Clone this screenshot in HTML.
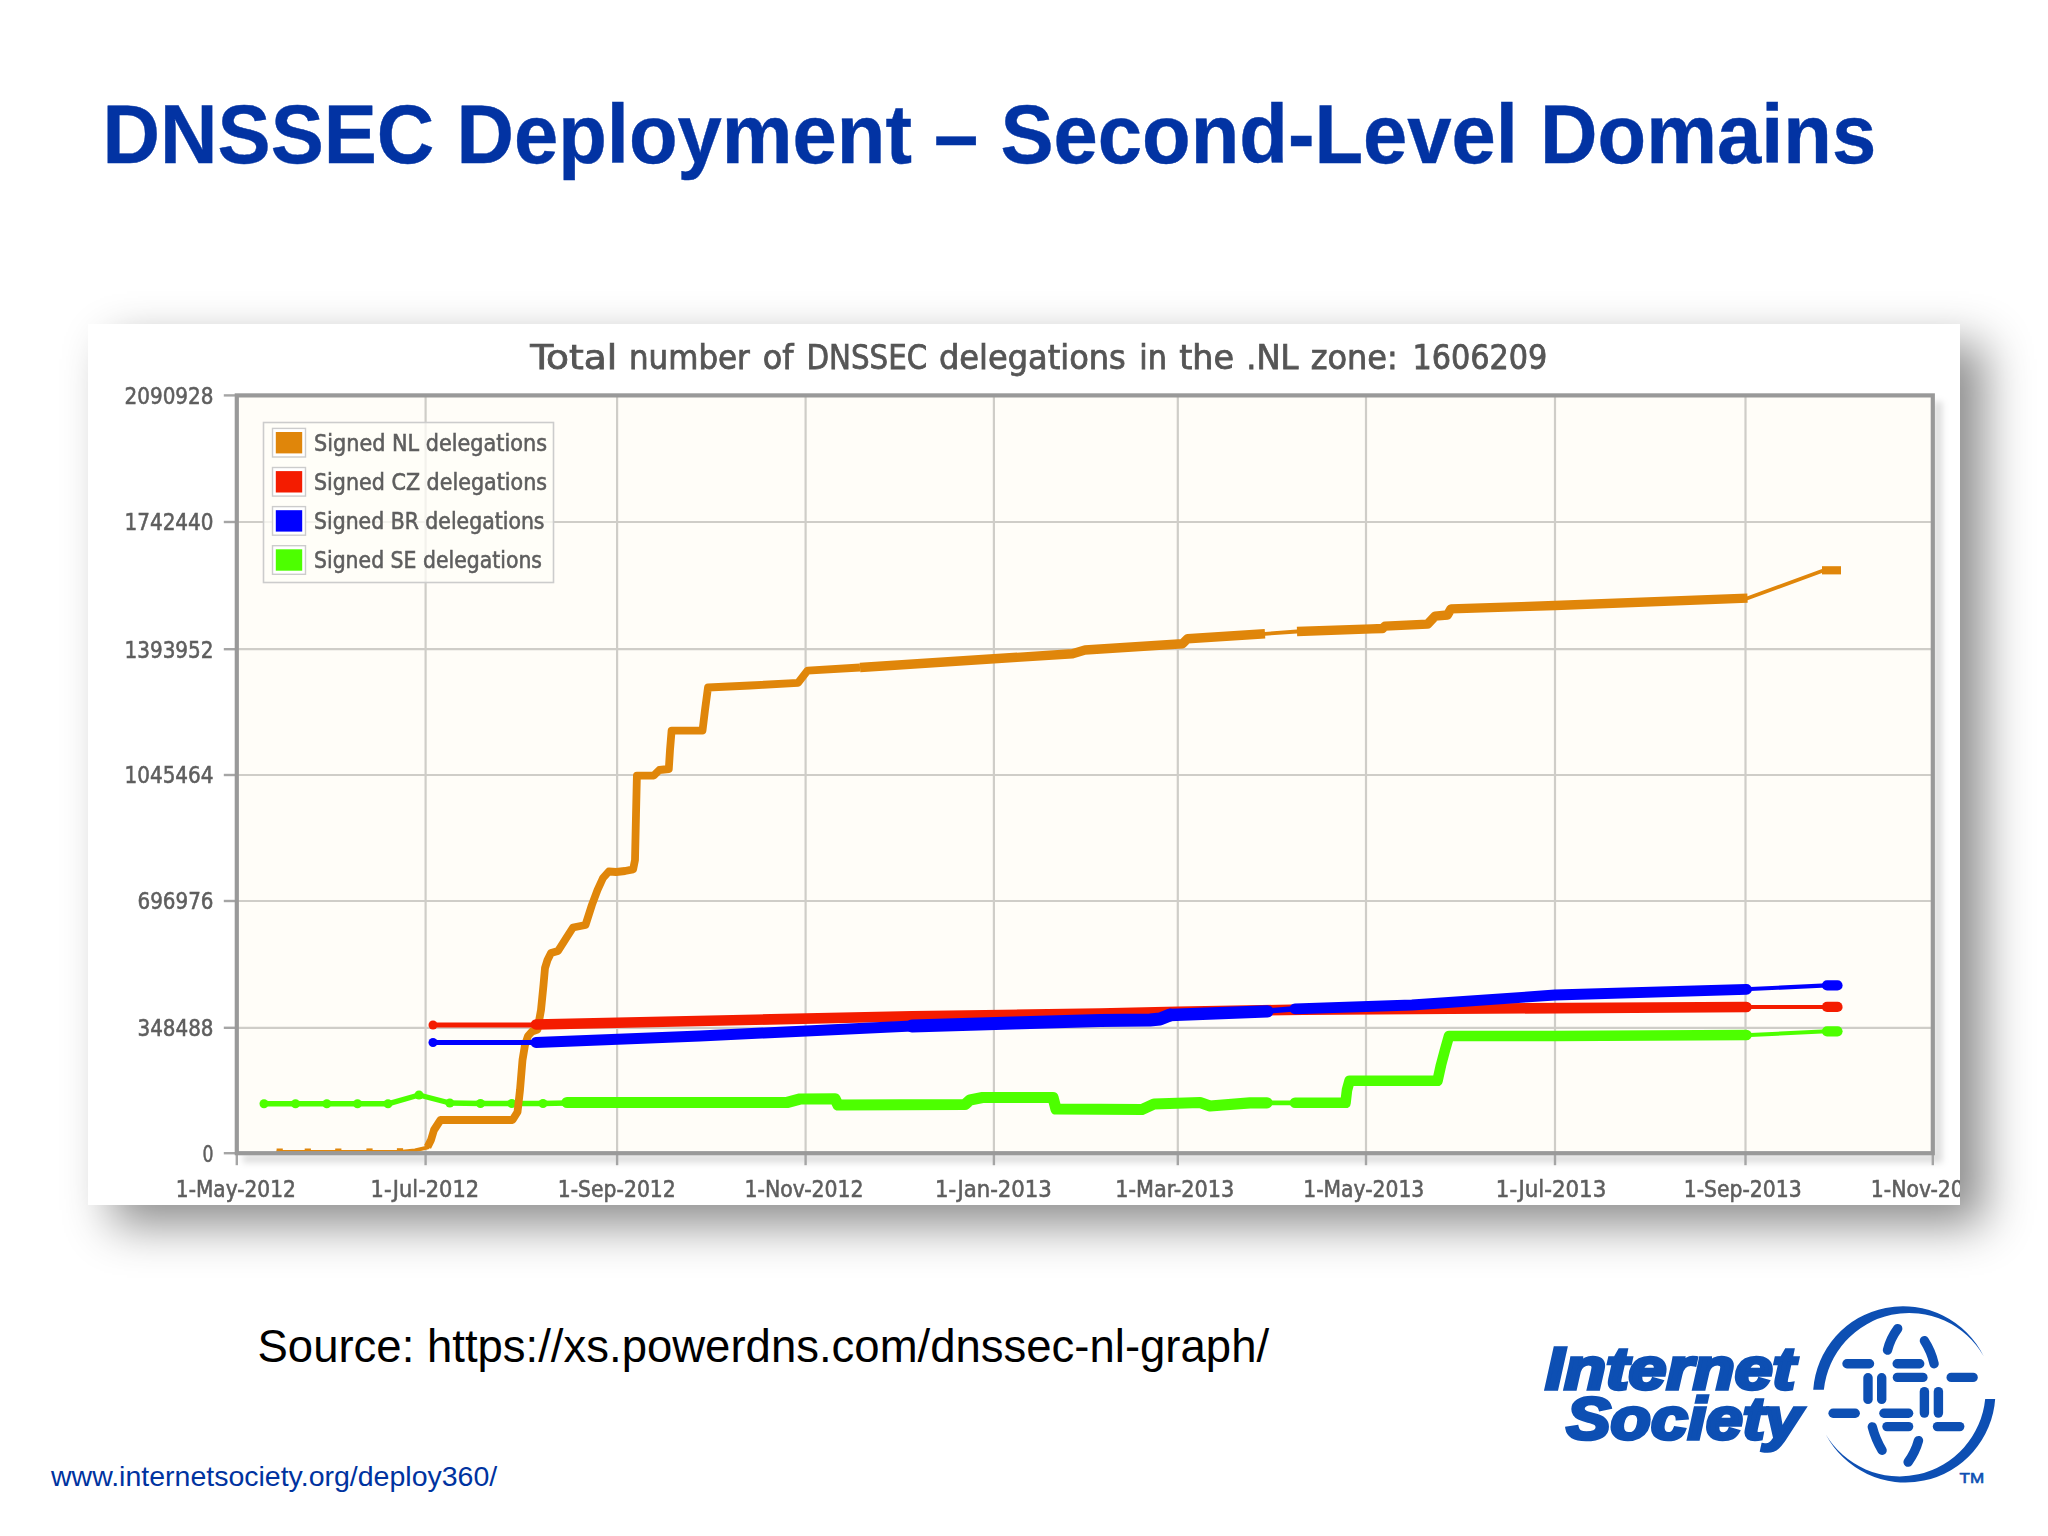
<!DOCTYPE html>
<html lang="en"><head><meta charset="utf-8"><title>DNSSEC Deployment – Second-Level Domains</title>
<style>
html,body{margin:0;padding:0;background:#fff;}
body{width:2048px;height:1536px;position:relative;overflow:hidden;font-family:"Liberation Sans",sans-serif;}
.title{position:absolute;left:102.6px;transform:scaleY(1.046);transform-origin:0 73.6px;top:90px;margin:0;font-size:79.6px;line-height:92px;font-weight:bold;color:#0233a3;-webkit-text-stroke:0.4px #0233a3;white-space:nowrap;}
.card{position:absolute;left:88px;top:324px;width:1872px;height:881px;background:#fff;box-shadow:24px 20px 44px rgba(0,0,2,0.45);}
.source{position:absolute;left:257.5px;top:1321px;font-size:45.5px;line-height:52px;color:#000;white-space:nowrap;}
.foot{position:absolute;left:51px;top:1458.5px;font-size:28.5px;line-height:34px;color:#0033a0;white-space:nowrap;}
</style></head><body>
<h1 class="title">DNSSEC Deployment – Second-Level Domains</h1>
<div class="card"></div>
<svg width="2048" height="1536" viewBox="0 0 2048 1536" style="position:absolute;left:0;top:0">
<defs><filter id="soft" color-interpolation-filters="sRGB" x="-2%" y="-2%" width="104%" height="104%"><feGaussianBlur stdDeviation="0.72"/></filter><filter id="gsh" color-interpolation-filters="sRGB" x="-5%" y="-5%" width="110%" height="110%"><feGaussianBlur stdDeviation="3"/></filter><clipPath id="cardclip"><rect x="88" y="324" width="1872" height="881"/></clipPath></defs>
<g clip-path="url(#cardclip)"><g filter="url(#soft)">
<path d="M242.8,1158.2 H1937.8 V401.4" fill="none" stroke="#000" stroke-opacity="0.13" stroke-width="9" filter="url(#gsh)"/>
<rect x="236.8" y="395.4" width="1696.0" height="757.8000000000001" fill="#fffdf8"/>
<line x1="425.6" y1="395.4" x2="425.6" y2="1153.2" stroke="#cfcdc8" stroke-width="2.2"/>
<line x1="617.1" y1="395.4" x2="617.1" y2="1153.2" stroke="#cfcdc8" stroke-width="2.2"/>
<line x1="805.6" y1="395.4" x2="805.6" y2="1153.2" stroke="#cfcdc8" stroke-width="2.2"/>
<line x1="993.9" y1="395.4" x2="993.9" y2="1153.2" stroke="#cfcdc8" stroke-width="2.2"/>
<line x1="1177.8" y1="395.4" x2="1177.8" y2="1153.2" stroke="#cfcdc8" stroke-width="2.2"/>
<line x1="1366.0" y1="395.4" x2="1366.0" y2="1153.2" stroke="#cfcdc8" stroke-width="2.2"/>
<line x1="1555.0" y1="395.4" x2="1555.0" y2="1153.2" stroke="#cfcdc8" stroke-width="2.2"/>
<line x1="1745.5" y1="395.4" x2="1745.5" y2="1153.2" stroke="#cfcdc8" stroke-width="2.2"/>
<line x1="236.8" y1="522.0" x2="1932.8" y2="522.0" stroke="#cfcdc8" stroke-width="2.2"/>
<line x1="236.8" y1="649.2" x2="1932.8" y2="649.2" stroke="#cfcdc8" stroke-width="2.2"/>
<line x1="236.8" y1="775.0" x2="1932.8" y2="775.0" stroke="#cfcdc8" stroke-width="2.2"/>
<line x1="236.8" y1="901.0" x2="1932.8" y2="901.0" stroke="#cfcdc8" stroke-width="2.2"/>
<line x1="236.8" y1="1027.8" x2="1932.8" y2="1027.8" stroke="#cfcdc8" stroke-width="2.2"/>
<line x1="236.8" y1="1153.2" x2="236.8" y2="1165.2" stroke="#a5a5a5" stroke-width="2.4"/>
<line x1="425.6" y1="1153.2" x2="425.6" y2="1165.2" stroke="#a5a5a5" stroke-width="2.4"/>
<line x1="617.1" y1="1153.2" x2="617.1" y2="1165.2" stroke="#a5a5a5" stroke-width="2.4"/>
<line x1="805.6" y1="1153.2" x2="805.6" y2="1165.2" stroke="#a5a5a5" stroke-width="2.4"/>
<line x1="993.9" y1="1153.2" x2="993.9" y2="1165.2" stroke="#a5a5a5" stroke-width="2.4"/>
<line x1="1177.8" y1="1153.2" x2="1177.8" y2="1165.2" stroke="#a5a5a5" stroke-width="2.4"/>
<line x1="1366.0" y1="1153.2" x2="1366.0" y2="1165.2" stroke="#a5a5a5" stroke-width="2.4"/>
<line x1="1555.0" y1="1153.2" x2="1555.0" y2="1165.2" stroke="#a5a5a5" stroke-width="2.4"/>
<line x1="1745.5" y1="1153.2" x2="1745.5" y2="1165.2" stroke="#a5a5a5" stroke-width="2.4"/>
<line x1="1932.8" y1="1153.2" x2="1932.8" y2="1165.2" stroke="#a5a5a5" stroke-width="2.4"/>
<line x1="223.8" y1="395.4" x2="236.8" y2="395.4" stroke="#a5a5a5" stroke-width="2.4"/>
<line x1="223.8" y1="522.0" x2="236.8" y2="522.0" stroke="#a5a5a5" stroke-width="2.4"/>
<line x1="223.8" y1="649.2" x2="236.8" y2="649.2" stroke="#a5a5a5" stroke-width="2.4"/>
<line x1="223.8" y1="775.0" x2="236.8" y2="775.0" stroke="#a5a5a5" stroke-width="2.4"/>
<line x1="223.8" y1="901.0" x2="236.8" y2="901.0" stroke="#a5a5a5" stroke-width="2.4"/>
<line x1="223.8" y1="1027.8" x2="236.8" y2="1027.8" stroke="#a5a5a5" stroke-width="2.4"/>
<line x1="223.8" y1="1153.2" x2="236.8" y2="1153.2" stroke="#a5a5a5" stroke-width="2.4"/>
<rect x="263.5" y="422.5" width="290" height="160" fill="#fffdf8" fill-opacity="0.75" stroke="#cccccc" stroke-width="1.6"/>
<rect x="272.5" y="428.4" width="33" height="28.6" fill="#fff" stroke="#cccccc" stroke-width="1.4"/>
<rect x="275.8" y="432.0" width="26.4" height="21.4" fill="#e0860a"/>
<text x="314" y="451.0" font-family='"DejaVu Sans Condensed","DejaVu Sans","Liberation Sans",sans-serif' font-size="23.5" fill="#5e5e5e" stroke="#5e5e5e" stroke-width="0.55" textLength="233" lengthAdjust="spacingAndGlyphs">Signed NL delegations</text>
<rect x="272.5" y="467.5" width="33" height="28.6" fill="#fff" stroke="#cccccc" stroke-width="1.4"/>
<rect x="275.8" y="471.1" width="26.4" height="21.4" fill="#f41c00"/>
<text x="314" y="490.1" font-family='"DejaVu Sans Condensed","DejaVu Sans","Liberation Sans",sans-serif' font-size="23.5" fill="#5e5e5e" stroke="#5e5e5e" stroke-width="0.55" textLength="233" lengthAdjust="spacingAndGlyphs">Signed CZ delegations</text>
<rect x="272.5" y="506.6" width="33" height="28.6" fill="#fff" stroke="#cccccc" stroke-width="1.4"/>
<rect x="275.8" y="510.2" width="26.4" height="21.4" fill="#0000ff"/>
<text x="314" y="529.2" font-family='"DejaVu Sans Condensed","DejaVu Sans","Liberation Sans",sans-serif' font-size="23.5" fill="#5e5e5e" stroke="#5e5e5e" stroke-width="0.55" textLength="230.5" lengthAdjust="spacingAndGlyphs">Signed BR delegations</text>
<rect x="272.5" y="545.7" width="33" height="28.6" fill="#fff" stroke="#cccccc" stroke-width="1.4"/>
<rect x="275.8" y="549.3" width="26.4" height="21.4" fill="#4dff00"/>
<text x="314" y="568.3" font-family='"DejaVu Sans Condensed","DejaVu Sans","Liberation Sans",sans-serif' font-size="23.5" fill="#5e5e5e" stroke="#5e5e5e" stroke-width="0.55" textLength="228" lengthAdjust="spacingAndGlyphs">Signed SE delegations</text>
<polyline points="264.0,1103.8 295.5,1103.8 326.8,1103.8 357.5,1103.8 388.0,1103.8 419.0,1095.0 449.8,1103.0 480.5,1103.5 511.8,1103.5 543.0,1103.5 567.0,1103.0" fill="none" stroke="#4dff00" stroke-width="5.4" stroke-linejoin="round" stroke-linecap="round"/>
<polyline points="1267.0,1102.8 1295.0,1102.8" fill="none" stroke="#4dff00" stroke-width="4.7" stroke-linejoin="round" stroke-linecap="round"/>
<polyline points="1750.0,1035.0 1827.0,1031.3" fill="none" stroke="#4dff00" stroke-width="4.0" stroke-linejoin="round" stroke-linecap="round"/>
<polyline points="567.0,1102.5 787.0,1102.5 800.0,1099.0 835.0,1098.8 838.0,1105.0 965.0,1104.5 970.0,1100.0 982.5,1097.5 1053.0,1097.5 1056.0,1109.0 1142.0,1109.5 1154.0,1104.0 1200.0,1102.5 1210.0,1106.0 1250.0,1102.8 1267.0,1102.8" fill="none" stroke="#4dff00" stroke-width="11.2" stroke-linejoin="round" stroke-linecap="round"/>
<polyline points="1295.0,1102.8 1345.5,1102.8 1347.0,1090.0 1349.5,1080.8 1437.5,1080.8 1441.0,1065.0 1445.0,1050.0 1449.0,1036.0 1555.0,1036.0 1746.5,1035.0" fill="none" stroke="#4dff00" stroke-width="10.6" stroke-linejoin="round" stroke-linecap="round"/>
<polyline points="1827.0,1031.3 1837.5,1031.3" fill="none" stroke="#4dff00" stroke-width="10.2" stroke-linejoin="round" stroke-linecap="round"/>
<circle cx="264.0" cy="1103.8" r="4.5" fill="#4dff00"/>
<circle cx="295.5" cy="1103.8" r="4.5" fill="#4dff00"/>
<circle cx="326.8" cy="1103.8" r="4.5" fill="#4dff00"/>
<circle cx="357.5" cy="1103.8" r="4.5" fill="#4dff00"/>
<circle cx="388.0" cy="1103.8" r="4.5" fill="#4dff00"/>
<circle cx="419.0" cy="1095.0" r="4.5" fill="#4dff00"/>
<circle cx="449.8" cy="1103.0" r="4.5" fill="#4dff00"/>
<circle cx="480.5" cy="1103.5" r="4.5" fill="#4dff00"/>
<circle cx="511.8" cy="1103.5" r="4.5" fill="#4dff00"/>
<circle cx="543.0" cy="1103.5" r="4.5" fill="#4dff00"/>

<polyline points="278.0,1152.0 400.0,1151.8 415.0,1150.3 428.0,1147.3" fill="none" stroke="#e0860a" stroke-width="3.8" stroke-linejoin="round" stroke-linecap="round"/>
<polyline points="1265.0,633.8 1297.0,631.5" fill="none" stroke="#e0860a" stroke-width="3.8" stroke-linejoin="round" stroke-linecap="round"/>
<polyline points="1747.5,598.2 1824.0,570.3" fill="none" stroke="#e0860a" stroke-width="3.8" stroke-linejoin="round" stroke-linecap="round"/>
<polyline points="427.5,1147.0 431.0,1140.0 434.0,1130.0 440.5,1120.0 512.5,1120.0 517.5,1112.0 520.0,1090.0 522.5,1060.0 525.0,1045.0 528.0,1036.0 532.0,1031.5 537.5,1029.5 541.0,1010.0 543.5,985.0 545.0,968.0 547.5,960.0 551.0,953.0 558.0,951.0 565.0,940.0 573.0,927.5 585.5,925.0 591.9,905.0 597.5,890.0 603.0,878.0 608.8,871.5 616.2,872.0 625.0,871.0 633.1,869.4 635.0,860.0 636.0,815.0 636.9,775.6 653.8,775.6 659.4,770.0 668.8,769.0 670.0,750.0 671.6,730.6 702.5,730.6 705.0,710.0 708.0,687.5 750.0,685.5 798.0,682.8 807.5,670.6 860.0,667.5" fill="none" stroke="#e0860a" stroke-width="7.8" stroke-linejoin="round" stroke-linecap="butt"/>
<polyline points="860.0,667.5 994.0,658.8 1072.5,653.8 1085.0,650.0 1182.5,643.8 1187.5,638.8 1265.0,633.8" fill="none" stroke="#e0860a" stroke-width="9.4" stroke-linejoin="round" stroke-linecap="butt"/>
<polyline points="1297.0,631.5 1372.0,628.8 1382.5,628.5 1385.0,626.2 1427.5,624.2 1435.0,616.2 1447.5,615.0 1451.0,608.8 1555.0,605.5 1747.5,598.2" fill="none" stroke="#e0860a" stroke-width="9.3" stroke-linejoin="round" stroke-linecap="butt"/>
<polyline points="1822.0,570.3 1841.0,570.3" fill="none" stroke="#e0860a" stroke-width="8.2" stroke-linejoin="round" stroke-linecap="butt"/>
<rect x="276.6" y="1148.5" width="6.2" height="6.2" fill="#e0860a"/>
<rect x="304.7" y="1148.5" width="6.2" height="6.2" fill="#e0860a"/>
<rect x="335.2" y="1148.5" width="6.2" height="6.2" fill="#e0860a"/>
<rect x="366.4" y="1148.4" width="6.2" height="6.2" fill="#e0860a"/>
<rect x="396.9" y="1148.2" width="6.2" height="6.2" fill="#e0860a"/>

<polyline points="433.0,1025.0 536.0,1025.0" fill="none" stroke="#f41c00" stroke-width="4.8" stroke-linejoin="round" stroke-linecap="round"/>
<polyline points="1750.0,1007.0 1827.0,1006.9" fill="none" stroke="#f41c00" stroke-width="4.0" stroke-linejoin="round" stroke-linecap="round"/>
<polyline points="536.0,1024.5 912.0,1016.3 1100.0,1013.5 1177.5,1011.8 1303.0,1009.6 1412.0,1009.0 1746.5,1007.0" fill="none" stroke="#f41c00" stroke-width="10.6" stroke-linejoin="round" stroke-linecap="round"/>
<polyline points="1827.0,1006.9 1837.5,1006.9" fill="none" stroke="#f41c00" stroke-width="10.2" stroke-linejoin="round" stroke-linecap="round"/>
<circle cx="433.0" cy="1025.0" r="4.5" fill="#f41c00"/>

<polyline points="433.0,1042.5 536.0,1042.5" fill="none" stroke="#0000ff" stroke-width="5.0" stroke-linejoin="round" stroke-linecap="round"/>
<polyline points="1267.5,1011.0 1295.0,1008.8" fill="none" stroke="#0000ff" stroke-width="5.4" stroke-linejoin="round" stroke-linecap="round"/>
<polyline points="1750.0,989.0 1827.0,985.4" fill="none" stroke="#0000ff" stroke-width="4.1" stroke-linejoin="round" stroke-linecap="round"/>
<polyline points="536.0,1042.5 700.0,1036.0 912.0,1026.0" fill="none" stroke="#0000ff" stroke-width="11" stroke-linejoin="round" stroke-linecap="round"/>
<polyline points="912.0,1026.0 1100.0,1020.5 1150.0,1020.0 1160.0,1019.0 1170.0,1015.0" fill="none" stroke="#0000ff" stroke-width="13" stroke-linejoin="round" stroke-linecap="round"/>
<polyline points="1170.0,1015.0 1267.5,1011.3" fill="none" stroke="#0000ff" stroke-width="12.3" stroke-linejoin="round" stroke-linecap="round"/>
<polyline points="1295.0,1008.8 1412.0,1005.0 1555.0,995.0 1746.5,989.4" fill="none" stroke="#0000ff" stroke-width="10.8" stroke-linejoin="round" stroke-linecap="round"/>
<polyline points="1827.0,985.4 1837.5,985.4" fill="none" stroke="#0000ff" stroke-width="10.2" stroke-linejoin="round" stroke-linecap="round"/>
<circle cx="433.0" cy="1042.5" r="4.5" fill="#0000ff"/>

<rect x="236.8" y="395.4" width="1696.0" height="757.8000000000001" fill="none" stroke="#999" stroke-width="4.2"/>
<text y="368.5" font-family='"DejaVu Sans Condensed","DejaVu Sans","Liberation Sans",sans-serif' font-size="33.5" fill="#555" stroke="#555" stroke-width="0.75"><tspan x="530.2" textLength="87.0" lengthAdjust="spacingAndGlyphs">Total</tspan> <tspan x="629.0" textLength="120.8" lengthAdjust="spacingAndGlyphs">number</tspan> <tspan x="762.8" textLength="30.7" lengthAdjust="spacingAndGlyphs">of</tspan> <tspan x="806.5" textLength="120.7" lengthAdjust="spacingAndGlyphs">DNSSEC</tspan> <tspan x="939.0" textLength="186.8" lengthAdjust="spacingAndGlyphs">delegations</tspan> <tspan x="1139.3" textLength="27.7" lengthAdjust="spacingAndGlyphs">in</tspan> <tspan x="1179.2" textLength="54.9" lengthAdjust="spacingAndGlyphs">the</tspan> <tspan x="1246.3" textLength="52.2" lengthAdjust="spacingAndGlyphs">.NL</tspan> <tspan x="1310.7" textLength="87.1" lengthAdjust="spacingAndGlyphs">zone:</tspan> <tspan x="1412.5" textLength="134.8" lengthAdjust="spacingAndGlyphs">1606209</tspan> </text>
<text x="124.5" y="403.7" font-family='"DejaVu Sans Condensed","DejaVu Sans","Liberation Sans",sans-serif' font-size="23.5" fill="#5e5e5e" stroke="#5e5e5e" stroke-width="0.55" textLength="89" lengthAdjust="spacingAndGlyphs">2090928</text>
<text x="124.5" y="530.3" font-family='"DejaVu Sans Condensed","DejaVu Sans","Liberation Sans",sans-serif' font-size="23.5" fill="#5e5e5e" stroke="#5e5e5e" stroke-width="0.55" textLength="89" lengthAdjust="spacingAndGlyphs">1742440</text>
<text x="124.5" y="657.5" font-family='"DejaVu Sans Condensed","DejaVu Sans","Liberation Sans",sans-serif' font-size="23.5" fill="#5e5e5e" stroke="#5e5e5e" stroke-width="0.55" textLength="89" lengthAdjust="spacingAndGlyphs">1393952</text>
<text x="124.5" y="783.3" font-family='"DejaVu Sans Condensed","DejaVu Sans","Liberation Sans",sans-serif' font-size="23.5" fill="#5e5e5e" stroke="#5e5e5e" stroke-width="0.55" textLength="89" lengthAdjust="spacingAndGlyphs">1045464</text>
<text x="137.5" y="909.3" font-family='"DejaVu Sans Condensed","DejaVu Sans","Liberation Sans",sans-serif' font-size="23.5" fill="#5e5e5e" stroke="#5e5e5e" stroke-width="0.55" textLength="76" lengthAdjust="spacingAndGlyphs">696976</text>
<text x="137.5" y="1036.1" font-family='"DejaVu Sans Condensed","DejaVu Sans","Liberation Sans",sans-serif' font-size="23.5" fill="#5e5e5e" stroke="#5e5e5e" stroke-width="0.55" textLength="76" lengthAdjust="spacingAndGlyphs">348488</text>
<text x="202.5" y="1161.5" font-family='"DejaVu Sans Condensed","DejaVu Sans","Liberation Sans",sans-serif' font-size="23.5" fill="#5e5e5e" stroke="#5e5e5e" stroke-width="0.55" textLength="11" lengthAdjust="spacingAndGlyphs">0</text>
<text x="175.8" y="1196.5" font-family='"DejaVu Sans Condensed","DejaVu Sans","Liberation Sans",sans-serif' font-size="23.5" fill="#5e5e5e" stroke="#5e5e5e" stroke-width="0.55" textLength="120" lengthAdjust="spacingAndGlyphs">1-May-2012</text>
<text x="370.6" y="1196.5" font-family='"DejaVu Sans Condensed","DejaVu Sans","Liberation Sans",sans-serif' font-size="23.5" fill="#5e5e5e" stroke="#5e5e5e" stroke-width="0.55" textLength="108.5" lengthAdjust="spacingAndGlyphs">1-Jul-2012</text>
<text x="557.8" y="1196.5" font-family='"DejaVu Sans Condensed","DejaVu Sans","Liberation Sans",sans-serif' font-size="23.5" fill="#5e5e5e" stroke="#5e5e5e" stroke-width="0.55" textLength="118" lengthAdjust="spacingAndGlyphs">1-Sep-2012</text>
<text x="744.6" y="1196.5" font-family='"DejaVu Sans Condensed","DejaVu Sans","Liberation Sans",sans-serif' font-size="23.5" fill="#5e5e5e" stroke="#5e5e5e" stroke-width="0.55" textLength="119" lengthAdjust="spacingAndGlyphs">1-Nov-2012</text>
<text x="934.9" y="1196.5" font-family='"DejaVu Sans Condensed","DejaVu Sans","Liberation Sans",sans-serif' font-size="23.5" fill="#5e5e5e" stroke="#5e5e5e" stroke-width="0.55" textLength="117" lengthAdjust="spacingAndGlyphs">1-Jan-2013</text>
<text x="1115.2" y="1196.5" font-family='"DejaVu Sans Condensed","DejaVu Sans","Liberation Sans",sans-serif' font-size="23.5" fill="#5e5e5e" stroke="#5e5e5e" stroke-width="0.55" textLength="119" lengthAdjust="spacingAndGlyphs">1-Mar-2013</text>
<text x="1303.3" y="1196.5" font-family='"DejaVu Sans Condensed","DejaVu Sans","Liberation Sans",sans-serif' font-size="23.5" fill="#5e5e5e" stroke="#5e5e5e" stroke-width="0.55" textLength="121" lengthAdjust="spacingAndGlyphs">1-May-2013</text>
<text x="1495.8" y="1196.5" font-family='"DejaVu Sans Condensed","DejaVu Sans","Liberation Sans",sans-serif' font-size="23.5" fill="#5e5e5e" stroke="#5e5e5e" stroke-width="0.55" textLength="110.5" lengthAdjust="spacingAndGlyphs">1-Jul-2013</text>
<text x="1683.7" y="1196.5" font-family='"DejaVu Sans Condensed","DejaVu Sans","Liberation Sans",sans-serif' font-size="23.5" fill="#5e5e5e" stroke="#5e5e5e" stroke-width="0.55" textLength="118" lengthAdjust="spacingAndGlyphs">1-Sep-2013</text>
<text x="1870.8" y="1196.5" font-family='"DejaVu Sans Condensed","DejaVu Sans","Liberation Sans",sans-serif' font-size="23.5" fill="#5e5e5e" stroke="#5e5e5e" stroke-width="0.55" textLength="119" lengthAdjust="spacingAndGlyphs">1-Nov-2013</text>
</g></g>
</svg>
<div class="source">Source: https://xs.powerdns.com/dnssec-nl-graph/</div>
<div class="foot">www.internetsociety.org/deploy360/</div>
<svg width="2048" height="1536" viewBox="0 0 2048 1536" style="position:absolute;left:0;top:0">
<line x1="1847.0" y1="1363.7" x2="1869.5" y2="1363.7" stroke="#0d4fb3" stroke-width="9.4" stroke-linecap="round"/>
<line x1="1897.2" y1="1363.7" x2="1919.7" y2="1363.7" stroke="#0d4fb3" stroke-width="9.4" stroke-linecap="round"/>
<line x1="1897.4" y1="1377.4" x2="1922.9" y2="1377.4" stroke="#0d4fb3" stroke-width="9.4" stroke-linecap="round"/>
<line x1="1951.2" y1="1377.4" x2="1973.1" y2="1377.4" stroke="#0d4fb3" stroke-width="9.4" stroke-linecap="round"/>
<line x1="1833.1" y1="1413.2" x2="1855.2" y2="1413.2" stroke="#0d4fb3" stroke-width="9.4" stroke-linecap="round"/>
<line x1="1883.9" y1="1413.2" x2="1908.6" y2="1413.2" stroke="#0d4fb3" stroke-width="9.4" stroke-linecap="round"/>
<line x1="1887.0" y1="1426.6" x2="1908.6" y2="1426.6" stroke="#0d4fb3" stroke-width="9.4" stroke-linecap="round"/>
<line x1="1937.5" y1="1426.6" x2="1959.7" y2="1426.6" stroke="#0d4fb3" stroke-width="9.4" stroke-linecap="round"/>
<line x1="1868.0" y1="1377.8" x2="1868.0" y2="1399.4" stroke="#0d4fb3" stroke-width="9.4" stroke-linecap="round"/>
<line x1="1881.7" y1="1377.8" x2="1881.7" y2="1399.4" stroke="#0d4fb3" stroke-width="9.4" stroke-linecap="round"/>
<line x1="1924.4" y1="1391.6" x2="1924.4" y2="1413.1" stroke="#0d4fb3" stroke-width="9.4" stroke-linecap="round"/>
<line x1="1938.4" y1="1391.6" x2="1938.4" y2="1413.1" stroke="#0d4fb3" stroke-width="9.4" stroke-linecap="round"/>
<path d="M1897.7,1328.6 Q1890.5,1338.3 1887.5,1350.1" fill="none" stroke="#0d4fb3" stroke-width="9.4" stroke-linecap="round"/>
<path d="M1924.4,1340.7 Q1931.3,1351.4 1934.1,1363.7" fill="none" stroke="#0d4fb3" stroke-width="9.4" stroke-linecap="round"/>
<path d="M1872.3,1426.9 Q1875.5,1439.3 1882.1,1450.3" fill="none" stroke="#0d4fb3" stroke-width="9.4" stroke-linecap="round"/>
<path d="M1918.5,1440.6 Q1915.3,1452.3 1908.1,1462.1" fill="none" stroke="#0d4fb3" stroke-width="9.4" stroke-linecap="round"/>
<path d="M1813.23,1389.8 A90.0,90.0 0 0 1 1983.68,1356.31 A85.76,85.76 0 0 0 1823.87,1389.8 Z" fill="#0d4fb3"/>
<path d="M1995.17,1398.9 A90.0,90.0 0 0 1 1825.81,1434.53 A85.98,85.98 0 0 0 1985.18,1398.9 Z" fill="#0d4fb3"/>
<text x="1545.3" y="1389.1" font-family='"Liberation Sans",sans-serif' font-weight="bold" font-style="italic" font-size="58.5" fill="#0d4fb3" stroke="#0d4fb3" stroke-width="3.6" stroke-linejoin="miter" textLength="250" lengthAdjust="spacingAndGlyphs">Internet</text>
<text x="1566.5" y="1439.3" font-family='"Liberation Sans",sans-serif' font-weight="bold" font-style="italic" font-size="58.5" fill="#0d4fb3" stroke="#0d4fb3" stroke-width="3.6" stroke-linejoin="miter" textLength="235" lengthAdjust="spacingAndGlyphs">Society</text>
<text x="1959.5" y="1482.9" font-family='"Liberation Sans",sans-serif' font-weight="normal" font-size="14.5" fill="#0d4fb3" stroke="#0d4fb3" stroke-width="0.6" textLength="24.6" lengthAdjust="spacingAndGlyphs">TM</text>
</svg>
</body></html>
